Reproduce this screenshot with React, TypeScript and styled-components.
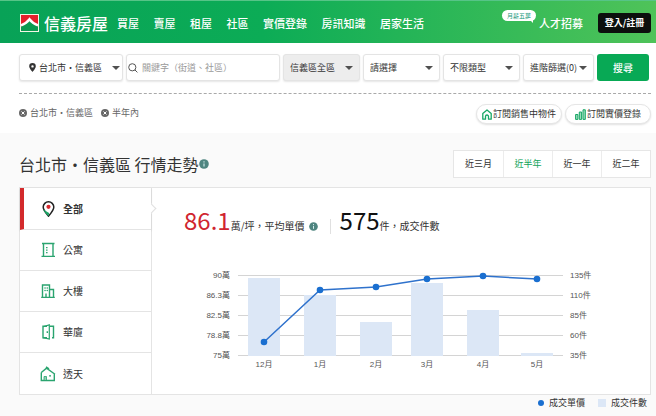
import React, { useState } from 'react';
import styled, { createGlobalStyle } from 'styled-components';

const GlobalStyle = createGlobalStyle`
  *, *::before, *::after { box-sizing: border-box; }
  body {
    margin: 0;
    background: #fafafa;
    color: #333;
    font-family: "Noto Sans CJK TC", "Noto Sans", sans-serif;
    font-size: 9px;
    line-height: 14px;
  }
  button, input, select { font: inherit; color: inherit; margin: 0; }
  button, select { cursor: pointer; }
  svg { display: block; flex: none; }
`;

const Header = styled.header`
  display: flex;
  align-items: center;
  height: 43px;
  padding: 2px 5px 0 20px;
  border-top: 1px solid #56c487;
  background: linear-gradient(90deg, #08a257 0%, #0cac56 40%, #4fc359 100%);
  color: #fff;
`;

const Logo = styled.a`
  display: flex;
  align-items: center;
  gap: 5px;
  color: #fff;
  text-decoration: none;
  font-size: 16px;
  font-weight: 500;
  line-height: 20px;
`;

const Nav = styled.nav`
  display: flex;
  justify-content: space-between;
  flex: 0 0 307px;
  margin-left: 9px;
`;

const NavLink = styled.a`
  color: #fff;
  text-decoration: none;
  white-space: nowrap;
  font-size: 11px;
  font-weight: 500;
  line-height: 16px;
`;

const Recruit = styled.div`
  position: relative;
  margin-left: auto;
`;

const Badge = styled.span`
  position: absolute;
  right: 47px;
  top: -5px;
  width: 34px;
  height: 11px;
  border-radius: 6px;
  background: #fff;
  color: #17987c;
  font-size: 6px;
  line-height: 11px;
  text-align: center;
  &::after {
    content: "";
    position: absolute;
    right: 3px;
    bottom: -2px;
    border-left: 5px solid transparent;
    border-top: 5px solid #fff;
  }
`;

const Login = styled.button`
  width: 53px;
  height: 20px;
  margin-left: 15px;
  padding: 0;
  border: 0;
  border-radius: 3px;
  background: #0c0f0d;
  color: #fff;
  font-weight: 700;
`;

const Filters = styled.section`
  padding: 11px 5px 9px 19px;
  background: #fff;
`;

const SearchRow = styled.form`
  display: flex;
  gap: 3px;
  padding: 0 2px 12px 0;
  border-bottom: 1px dashed #a9a9a9;
`;

const Field = styled.label<{ $width?: number; $muted?: boolean }>`
  position: relative;
  display: flex;
  align-items: center;
  flex: ${(p) => (p.$width ? `0 0 ${p.$width}px` : '1 1 0')};
  min-width: 0;
  height: 27px;
  border: 1px solid #e4e4e4;
  border-radius: 3px;
  background: ${(p) => (p.$muted ? '#ededed' : '#fff')};
  box-shadow: 0 1px 2px rgba(0, 0, 0, 0.1);
`;

const FieldIcon = styled.span<{ $left: number }>`
  position: absolute;
  left: ${(p) => p.$left}px;
  pointer-events: none;
`;

const Caret = styled.span<{ $near?: boolean }>`
  position: absolute;
  right: ${(p) => (p.$near ? 2 : 6)}px;
  border: 4px solid transparent;
  border-top-color: #505050;
  border-bottom: 0;
  pointer-events: none;
`;

const Select = styled.select<{ $indent?: boolean }>`
  width: 100%;
  height: 100%;
  padding: 0 12px 0 ${(p) => (p.$indent ? 19 : 6)}px;
  border: 0;
  background: transparent;
  appearance: none;
`;

const Keyword = styled.input`
  width: 100%;
  height: 100%;
  padding: 0 4px 0 15px;
  border: 0;
  background: transparent;
  &::placeholder { color: #9a9a9a; opacity: 1; }
`;

const MoreButton = styled.button`
  position: relative;
  display: flex;
  align-items: center;
  flex: 0 0 71px;
  height: 27px;
  padding: 0 0 0 6px;
  border: 1px solid #e4e4e4;
  border-radius: 3px;
  background: #fff;
  white-space: nowrap;
  box-shadow: 0 1px 2px rgba(0, 0, 0, 0.1);
`;

const SearchButton = styled.button`
  flex: 0 0 52px;
  height: 27px;
  padding: 0;
  border: 0;
  border-radius: 3px;
  background: #08a955;
  color: #fff;
  font-size: 10px;
  font-weight: 500;
`;

const TagRow = styled.div`
  display: flex;
  align-items: center;
  gap: 8px;
  padding-top: 10px;
`;

const Tag = styled.button`
  display: flex;
  align-items: center;
  gap: 3px;
  padding: 0 0 3px;
  border: 0;
  background: none;
  color: #666;
`;

const Pills = styled.div`
  display: flex;
  gap: 3px;
  margin-left: auto;
`;

const Pill = styled.button`
  display: flex;
  align-items: center;
  justify-content: center;
  gap: 1px;
  width: 86px;
  height: 20px;
  padding: 0;
  border: 1px solid #e6e6e6;
  border-radius: 10px;
  background: #fff;
  white-space: nowrap;
  box-shadow: 0 1px 2px rgba(0, 0, 0, 0.12);
`;

const Trend = styled.main`
  padding: 17px 5px 0 19px;
`;

const TitleRow = styled.div`
  display: flex;
  align-items: center;
  justify-content: space-between;
  margin-bottom: 9px;
`;

const Title = styled.h1`
  display: flex;
  align-items: center;
  margin: 0;
  font-size: 16px;
  font-weight: 400;
  line-height: 24px;
`;

const Periods = styled.div`
  display: flex;
  border: 1px solid #e6e6e6;
  background: #fff;
`;

const Period = styled.button<{ $active: boolean }>`
  width: 49px;
  height: 26px;
  padding: 0;
  border: 0;
  background: #fff;
  color: ${(p) => (p.$active ? '#13a35b' : '#333')};
  & + & { border-left: 1px solid #ececec; }
`;

const Panel = styled.section`
  display: flex;
  border: 1px solid #e4e4e4;
  background: #fff;
`;

const Side = styled.div`
  display: flex;
  flex-direction: column;
  flex: 0 0 132px;
  border-right: 1px solid #e4e4e4;
`;

const Kind = styled.button<{ $active: boolean }>`
  position: relative;
  display: flex;
  align-items: center;
  gap: 7px;
  height: 41px;
  padding: 0 0 0 ${(p) => (p.$active ? 16 : 20)}px;
  border: 0;
  border-left: ${(p) => (p.$active ? '4px solid #d32a2c' : '0')};
  border-bottom: 1px solid #e4e4e4;
  background: #fff;
  font-size: 10px;
  font-weight: ${(p) => (p.$active ? 700 : 400)};
  box-shadow: ${(p) => (p.$active ? '0 1px 2px rgba(0, 0, 0, 0.12)' : 'none')};
  &:first-child { height: 42px; }
  &:last-child { border-bottom: 0; }
`;

const Pointer = styled.span`
  position: absolute;
  right: -4px;
  width: 7px;
  height: 7px;
  border: 1px solid #e0e0e0;
  border-left: 0;
  border-bottom: 0;
  background: #fff;
  transform: rotate(45deg);
`;

const Content = styled.div`
  flex: 1;
  min-width: 0;
  padding-top: 14px;
`;

const Stats = styled.div`
  display: flex;
  align-items: center;
  padding-left: 32px;
`;

const Stat = styled.p`
  display: flex;
  align-items: baseline;
  margin: 0;
  font-size: 10px;
  line-height: 36px;
`;

const Figure = styled.strong<{ $red?: boolean }>`
  color: ${(p) => (p.$red ? '#d0252f' : '#111')};
  font-size: 24px;
  font-weight: 400;
`;

const InfoSlot = styled.span`
  margin: 6px 12px 0 4px;
`;

const Divider = styled.span`
  width: 1px;
  height: 15px;
  margin: 6px 9px 0 0;
  background: #e0e0e0;
`;

const Chart = styled.svg`
  width: 100%;
  height: auto;
  margin-top: 27px;
  font-family: "Liberation Sans", "Noto Sans CJK TC", sans-serif;
  font-size: 8px;
  fill: #555;
`;

const Legend = styled.div`
  display: flex;
  justify-content: flex-end;
  gap: 13px;
  padding: 1px 4px 5px 0;
`;

const LegendItem = styled.span`
  display: flex;
  align-items: center;
  gap: 5px;
`;

const Mark = styled.i<{ $dot?: boolean }>`
  width: ${(p) => (p.$dot ? 6 : 8)}px;
  height: ${(p) => (p.$dot ? 6 : 8)}px;
  border-radius: ${(p) => (p.$dot ? '50%' : '0')};
  background: ${(p) => (p.$dot ? '#1a6fd0' : '#dce7f6')};
`;

const InfoIcon = ({ size }: { size: number }) => (
  <svg width={size} height={size} viewBox="0 0 10 10" aria-hidden="true">
    <circle cx="5" cy="5" r="4.8" fill="#4f8580" />
    <path d="M5 2.3v1.2M5 4.4v3.2" stroke="#d5eeee" strokeWidth="1.1" />
  </svg>
);

const LogoMark = () => (
  <svg width="19" height="18" viewBox="0 0 19 18" aria-hidden="true">
    <rect x="0.5" y="0.5" width="18" height="17" fill="#e4202c" stroke="#f3f6e6" />
    <path d="M1 12.4C4.5 11 7.5 9 9.5 6.2C11.5 9 14.5 11 18 12.4V17H1z" fill="#0b9a50" />
    <path d="M1 11.400C4.500 10 7.500 8 9.500 5.200C11.500 8 14.500 10 18 11.400" fill="none" stroke="#fff" strokeWidth="2.400" />
  </svg>
);

const PlaceIcon = () => (
  <svg width="7" height="9" viewBox="0 0 7 9" aria-hidden="true">
    <path fillRule="evenodd" d="M3.5 0A3.3 3.3 0 0 0 .2 3.3C.2 5.5 3.5 9 3.5 9s3.3-3.5 3.3-5.7A3.3 3.3 0 0 0 3.5 0zm0 2.2a1.200 1.200 0 1 1 0 2.400 1.200 1.200 0 0 1 0-2.400z" fill="#333" />
  </svg>
);

const SearchIcon = () => (
  <svg width="10" height="10" viewBox="0 0 10 10" fill="none" stroke="#555" aria-hidden="true">
    <circle cx="4.3" cy="4.3" r="3.6" />
    <path d="M6.9 6.9L9.4 9.4" />
  </svg>
);

const RemoveIcon = () => (
  <svg width="8" height="8" viewBox="0 0 8 8" aria-hidden="true">
    <circle cx="4" cy="4" r="4" fill="#686868" />
    <path d="M2.5 2.5l3 3M5.5 2.5l-3 3" stroke="#fff" />
  </svg>
);

const HomeIcon = () => (
  <svg width="10" height="11" viewBox="0 0 10 11" fill="none" stroke="#17a765" strokeWidth="1.3" strokeLinejoin="round" aria-hidden="true">
    <path d="M.8 4.5L5 .9l4.2 3.6v5.7H6.500V7.500a1.500 1.500 0 0 0-3 0v2.700H.8z" />
  </svg>
);

const BarsIcon = () => (
  <svg width="11" height="11" viewBox="0 0 11 11" fill="#9bdcbb" stroke="#17a765" aria-hidden="true">
    <path d="M.6 5.5h2.300v4.900H.6zM4.300 3h2.300v7.400H4.300zM8 .8h2.300v9.600H8z" />
  </svg>
);

type KindId = 'all' | 'apartment' | 'tower' | 'mansion' | 'house';

const KindIcon = ({ id }: { id: KindId }) => (
  <svg width="16" height="16" viewBox="0 0 16 16" fill="none" stroke="#2aa46f" strokeWidth="1.4" aria-hidden="true">
    {id === 'all' && (
      <>
        <path d="M8.5 15.2C6 12.3 3.2 9.3 3.2 6.1a5.3 5.3 0 0 1 10.6 0c0 3.2-2.8 6.2-5.3 9.1z" stroke="#222" strokeWidth="1.5" />
        <path d="M3.2 8.5c.9 2.300 3.300 4.600 5.300 6.900l.6-3.400z" fill="#1aa565" stroke="none" />
        <circle cx="8.5" cy="5.8" r="2.1" fill="#d9282e" stroke="none" />
      </>
    )}
    {id === 'apartment' && (
      <>
        <path d="M1.5 14.400h13.500M3.500 14V1.500h9.500V14M2 1.500h12.500" />
        <path d="M6.800 5v1.300M6.800 7.500v1.300M6.800 10v1.300" strokeWidth="1.500" />
      </>
    )}
    {id === 'tower' && (
      <>
        <path d="M1.200 14.400h13.600M2.500 14V2h7v12M9.500 6.500h4V14" />
        <path d="M5 5h.1M7.200 5h.1M5 7.500h.1M7.200 7.500h.1" strokeWidth="1.500" strokeLinecap="round" />
        <path d="M6 14v-3.500" />
      </>
    )}
    {id === 'mansion' && (
      <>
        <path d="M7 2.200H3v11.600h4M9.500 2.300H13.500v11.500H12" />
        <path d="M3 2.800L9.300.9v14.200L3 13.600" strokeWidth="1.200" />
        <path d="M7.300 7.300v1.700" />
      </>
    )}
    {id === 'house' && (
      <>
        <path d="M1.300 6.500L6.500 2.200l8.500 6M1.300 6.500v8h13V8M6 .9l3 2" />
        <path d="M4 14v-3.500h2.500V14" fill="#8fd0b4" strokeWidth="0.800" />
        <path d="M10 9.800h.1" strokeWidth="1.800" strokeLinecap="round" />
      </>
    )}
  </svg>
);

const navItems = ['買屋', '賣屋', '租屋', '社區', '實價登錄', '房訊知識', '居家生活'];
const periods = ['近三月', '近半年', '近一年', '近二年'];
const kinds: { id: KindId; label: string }[] = [
  { id: 'all', label: '全部' },
  { id: 'apartment', label: '公寓' },
  { id: 'tower', label: '大樓' },
  { id: 'mansion', label: '華廈' },
  { id: 'house', label: '透天' },
];
const months = [
  { label: '12月', x: 112, bar: 78, point: 71 },
  { label: '1月', x: 168, bar: 61, point: 19 },
  { label: '2月', x: 224, bar: 34, point: 16 },
  { label: '3月', x: 275, bar: 73, point: 8 },
  { label: '4月', x: 331, bar: 46, point: 5 },
  { label: '5月', x: 385, bar: 3, point: 8 },
];
const grid = [
  { y: 4, price: '90萬', count: '135件' },
  { y: 24, price: '86.3萬', count: '110件' },
  { y: 44, price: '82.5萬', count: '85件' },
  { y: 64, price: '78.8萬', count: '60件' },
  { y: 84, price: '75萬', count: '35件' },
];

const TrendChart = () => (
  <Chart viewBox="0 0 498 106" role="img" aria-label="行情走勢">
    {grid.map((g) => (
      <g key={g.y}>
        <rect x="86" y={g.y} width="325" height="1" fill="#d4d4d4" />
        <text x="78" y={g.y + 3} textAnchor="end">{g.price}</text>
        <text x="418" y={g.y + 3}>{g.count}</text>
      </g>
    ))}
    {months.map((m) => (
      <g key={m.label}>
        <rect x={m.x - 16} y={85 - m.bar} width="32" height={m.bar} fill="#dce7f6" />
        <text x={m.x} y="96" textAnchor="middle">{m.label}</text>
      </g>
    ))}
    <polyline points={months.map((m) => `${m.x},${m.point}`).join(' ')} fill="none" stroke="#2f72cc" strokeWidth="1.5" />
    {months.map((m) => (
      <circle key={m.label} cx={m.x} cy={m.point} r="3.3" fill="#1a6fd0" />
    ))}
  </Chart>
);

export default function App() {
  const [period, setPeriod] = useState('近半年');
  const [kind, setKind] = useState<KindId>('all');

  return (
    <>
      <GlobalStyle />
      <Header>
        <Logo href="#"><LogoMark />信義房屋</Logo>
        <Nav>
          {navItems.map((item) => <NavLink key={item} href="#">{item}</NavLink>)}
        </Nav>
        <Recruit>
          <NavLink href="#">人才招募</NavLink>
          <Badge>月薪五萬</Badge>
        </Recruit>
        <Login type="button">登入/註冊</Login>
      </Header>

      <Filters>
        <SearchRow onSubmit={(e) => e.preventDefault()}>
          <Field $width={104}>
            <FieldIcon $left={9}><PlaceIcon /></FieldIcon>
            <Select $indent aria-label="縣市"><option>台北市・信義區</option></Select>
            <Caret $near />
          </Field>
          <Field>
            <FieldIcon $left={1}><SearchIcon /></FieldIcon>
            <Keyword type="text" aria-label="關鍵字" placeholder="關鍵字（街道、社區）" />
          </Field>
          <Field $width={77} $muted>
            <Select aria-label="區域"><option>信義區全區</option></Select>
            <Caret />
          </Field>
          <Field $width={77}>
            <Select aria-label="期間"><option>請選擇</option></Select>
            <Caret />
          </Field>
          <Field $width={77}>
            <Select aria-label="類型"><option>不限類型</option></Select>
            <Caret />
          </Field>
          <MoreButton type="button">進階篩選(0)<Caret /></MoreButton>
          <SearchButton type="submit">搜尋</SearchButton>
        </SearchRow>
        <TagRow>
          <Tag type="button"><RemoveIcon />台北市・信義區</Tag>
          <Tag type="button"><RemoveIcon />半年內</Tag>
          <Pills>
            <Pill type="button"><HomeIcon />訂閱銷售中物件</Pill>
            <Pill type="button"><BarsIcon />訂閱實價登錄</Pill>
          </Pills>
        </TagRow>
      </Filters>

      <Trend>
        <TitleRow>
          <Title>台北市・信義區 行情走勢<InfoIcon size={10} /></Title>
          <Periods>
            {periods.map((p) => (
              <Period key={p} type="button" $active={p === period} onClick={() => setPeriod(p)}>{p}</Period>
            ))}
          </Periods>
        </TitleRow>
        <Panel>
          <Side>
            {kinds.map((k) => (
              <Kind key={k.id} type="button" $active={k.id === kind} onClick={() => setKind(k.id)}>
                <KindIcon id={k.id} />
                {k.label}
                {k.id === kind && <Pointer />}
              </Kind>
            ))}
          </Side>
          <Content>
            <Stats>
              <Stat><Figure $red>86.1</Figure>萬/坪，平均單價</Stat>
              <InfoSlot><InfoIcon size={9} /></InfoSlot>
              <Divider />
              <Stat><Figure>575</Figure>件，成交件數</Stat>
            </Stats>
            <TrendChart />
          </Content>
        </Panel>
        <Legend>
          <LegendItem><Mark $dot />成交單價</LegendItem>
          <LegendItem><Mark />成交件數</LegendItem>
        </Legend>
      </Trend>
    </>
  );
}
